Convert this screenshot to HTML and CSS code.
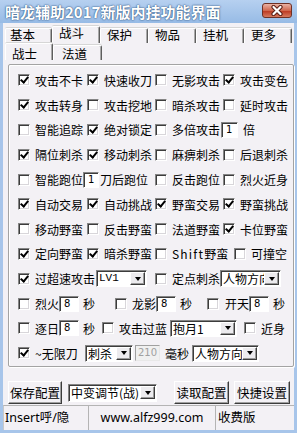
FILE: index.html
```html
<!DOCTYPE html>
<html>
	<head>
		<meta charset="utf-8">
		<title>暗龙辅助2017新版内挂功能界面</title>
		<link rel="stylesheet" href="styles.css">
	</head>
	<body>
		<div class="window">
			<div class="title_bar">
				<span class="title_text">暗龙辅助2017新版内挂功能界面</span>
				<span class="close_button">
					<svg width="14" height="11" viewBox="0 0 14 11">
						<path d="M3.5 2 L10.5 9 M10.5 2 L3.5 9" stroke="#5b1f16" stroke-width="4.2" stroke-linecap="round"/>
						<path d="M3.5 2 L10.5 9 M10.5 2 L3.5 9" stroke="#fff" stroke-width="2.2" stroke-linecap="round"/>
					</svg>
				</span>
			</div>
			<div class="client">
				<div class="tab_row">
					<span class="tab tab_first">基本</span>
					<span class="tab tab_on">战斗</span>
					<span class="tab">保护</span>
					<span class="tab">物品</span>
					<span class="tab">挂机</span>
					<span class="tab">更多</span>
				</div>
				<div class="tab_row sub_row">
					<span class="tab tab_on">战士</span>
					<span class="tab">法道</span>
				</div>

				<div class="group">
					<div class="row">
						<label class="opt"><span class="check on"></span>攻击不卡</label>
						<label class="opt"><span class="check on"></span>快速收刀</label>
						<label class="opt"><span class="check"></span>无影攻击</label>
						<label class="opt"><span class="check on"></span>攻击变色</label>
					</div>
					<div class="row">
						<label class="opt"><span class="check on"></span>攻击转身</label>
						<label class="opt"><span class="check"></span>攻击挖地</label>
						<label class="opt"><span class="check"></span>暗杀攻击</label>
						<label class="opt"><span class="check"></span>延时攻击</label>
					</div>
					<div class="row">
						<label class="opt"><span class="check"></span>智能追踪</label>
						<label class="opt"><span class="check on"></span>绝对锁定</label>
						<label class="opt wide"><span class="check"></span>多倍攻击<span class="edit edit_small">1</span><span class="unit_wide">倍</span></label>
					</div>
					<div class="row">
						<label class="opt"><span class="check on"></span>隔位刺杀</label>
						<label class="opt"><span class="check on"></span>移动刺杀</label>
						<label class="opt"><span class="check"></span>麻痹刺杀</label>
						<label class="opt"><span class="check"></span>后退刺杀</label>
					</div>
					<div class="row">
						<label class="opt wide"><span class="check"></span>智能跑位<span class="edit edit_run">1</span><span class="after_text">刀后跑位</span></label>
						<label class="opt"><span class="check"></span>反击跑位</label>
						<label class="opt"><span class="check"></span>烈火近身</label>
					</div>
					<div class="row">
						<label class="opt"><span class="check on"></span>自动交易</label>
						<label class="opt"><span class="check on"></span>自动挑战</label>
						<label class="opt"><span class="check on"></span>野蛮交易</label>
						<label class="opt"><span class="check on"></span>野蛮挑战</label>
					</div>
					<div class="row">
						<label class="opt"><span class="check"></span>移动野蛮</label>
						<label class="opt"><span class="check"></span>反击野蛮</label>
						<label class="opt"><span class="check"></span>法道野蛮</label>
						<label class="opt"><span class="check on"></span>卡位野蛮</label>
					</div>
					<div class="row">
						<label class="opt"><span class="check on"></span>定向野蛮</label>
						<label class="opt"><span class="check on"></span>暗杀野蛮</label>
						<label class="opt"><span class="check"></span><span class="shift">Shift</span>野蛮</label>
						<label class="opt opt_push"><span class="check"></span>可撞空</label>
					</div>
					<div class="row">
						<label class="opt wide"><span class="check on"></span>过超速攻击<span class="combo combo_lv"><span class="combo_text">LV1</span><span class="combo_button"></span></span></label>
						<label class="opt wide"><span class="check"></span>定点刺杀<span class="combo combo_dir"><span class="combo_text">人物方向</span><span class="combo_button"></span></span></label>
					</div>
					<div class="row_free">
						<label class="opt cell_fire"><span class="check"></span>烈火<span class="edit edit_sec">8</span><span class="unit">秒</span></label>
						<label class="opt cell_dragon"><span class="check"></span>龙影<span class="edit edit_sec">8</span><span class="unit">秒</span></label>
						<label class="opt"><span class="check"></span><span class="label_sky">开天</span><span class="edit edit_sec">8</span><span class="unit">秒</span></label>
					</div>
					<div class="row_free">
						<label class="opt cell_sun"><span class="check"></span>逐日<span class="edit edit_sec">8</span><span class="unit">秒</span></label>
						<label class="opt cell_blue"><span class="check"></span>攻击过蓝<span class="combo combo_moon"><span class="combo_text">抱月1</span><span class="combo_button"></span></span></label>
						<label class="opt"><span class="check"></span>近身</label>
					</div>
					<div class="row_free">
						<label class="opt"><span class="check on"></span><span class="label_inf">~无限刀</span></label>
						<span class="combo combo_kill"><span class="combo_text">刺杀</span><span class="combo_button"></span></span>
						<span class="edit edit_ms">210</span>
						<span class="unit_ms">毫秒</span>
						<span class="combo combo_face"><span class="combo_text">人物方向</span><span class="combo_button"></span></span>
					</div>
				</div>

				<div class="button_row">
					<span class="push push_save">保存配置</span>
					<span class="combo combo_mode"><span class="combo_text">中变调节(战)</span><span class="combo_button"></span></span>
					<span class="push push_load">读取配置</span>
					<span class="push push_keys">快捷设置</span>
				</div>

				<div class="status_bar">
					<span class="status_cell status_key">Insert呼/隐</span>
					<span class="status_cell status_site">www.alfz999.com</span>
					<span class="status_cell status_ver">收费版</span>
				</div>
			</div>
		</div>
	</body>
</html>
```

FILE: styles.css
```css
body
{
	margin:0;
	font-family:"Noto Sans CJK SC", "Noto Sans", sans-serif;
	font-size:12px;
	color:#000;
}
.window
{
	width:297px;
	height:433px;
	box-sizing:border-box;
	padding:0 3px 3px 3px;
	background:#a7c5ea;
	display:flex;
	flex-direction:column;
}
/*=============================*/
.title_bar
{
	height:23px;
	flex:none;
	margin:0 -3px;
	padding:0 5px;
	display:flex;
	justify-content:space-between;
	align-items:center;
	background:linear-gradient(#b6d0f0, #97bbe5);
}
.title_text
{
	color:#fff;
	font-size:15px;
	font-weight:bold;
	line-height:23px;
	text-shadow:0 0 2px #2f5580, 0 0 1px #2f5580;
}
.close_button
{
	width:30px;
	height:15px;
	box-sizing:border-box;
	align-self:flex-start;
	margin-top:3px;
	border:1px solid #6e3025;
	border-radius:3px;
	background:linear-gradient(#eab2a4, #d0684f 50%, #bd3a23 55%, #d57a5f);
	display:flex;
	justify-content:center;
	align-items:center;
}
/*=============================*/
.client
{
	flex:1;
	background:#f3f1f5;
	display:flex;
	flex-direction:column;
}
.tab_row
{
	height:17px;
	flex:none;
	margin-top:3px;
	padding-left:2px;
	display:flex;
	align-items:flex-end;
}
.sub_row
{
	margin-top:0;
}
.tab
{
	width:48px;
	height:15px;
	box-sizing:border-box;
	padding-left:6px;
	border-top:1px solid #fff;
	border-left:1px solid #fff;
	border-right:1px solid #5e5e5e;
	border-top-left-radius:2px;
	border-top-right-radius:2px;
	box-shadow:inset -1px 0 0 #a9a9a9, 0 -1px 0 #d6d6d6;
	font-size:12.5px;
	line-height:12px;
	white-space:nowrap;
}
.tab_first
{
	width:47px;
	padding-left:4px;
}
.tab_on
{
	height:17px;
	line-height:12px;
}
.sub_row .tab
{
	width:49px;
	padding-left:8px;
	line-height:15px;
}
.sub_row .tab_on
{
	width:48px;
	padding-left:6px;
	line-height:19px;
}
/*=============================*/
.group
{
	height:303px;
	flex:none;
	box-sizing:border-box;
	margin:4px 0 0 5px;
	width:286px;
	padding-top:3px;
	border:1px solid #a3a3a3;
	border-radius:2px;
	box-shadow:1px 1px 0 #fff, inset 1px 1px 0 #fff;
}
.row
{
	height:24.8px;
	padding-left:9px;
	display:grid;
	grid-template-columns:69px 68px 68px 68px;
	align-items:center;
}
.row_free
{
	height:24.8px;
	padding-left:9px;
	display:flex;
	align-items:center;
}
.opt
{
	display:flex;
	align-items:center;
	white-space:nowrap;
}
.wide
{
	grid-column:span 2;
}
.opt_push
{
	margin-left:11px;
}
.check
{
	position:relative;
	flex:none;
	width:12px;
	height:12px;
	box-sizing:border-box;
	margin-right:5px;
	border:1px solid;
	border-color:#858585 #fff #fff #858585;
	box-shadow:inset 1px 1px 0 #3c3c3c, inset -1px -1px 0 #d8d6da;
	background:#fff;
}
.check.on::after
{
	content:"";
	position:absolute;
	left:3px;
	top:0px;
	width:3px;
	height:6px;
	border:solid #000;
	border-width:0 2px 2px 0;
	transform:rotate(40deg);
}
.shift
{
	letter-spacing:1.2px;
}
/*=============================*/
.edit
{
	height:16px;
	box-sizing:border-box;
	flex:none;
	padding-left:4px;
	border:1px solid;
	border-color:#858585 #fff #fff #858585;
	box-shadow:inset 1px 1px 0 #3c3c3c;
	background:#fff;
	font-family:"DejaVu Sans", sans-serif;
	font-size:10px;
	line-height:14px;
}
.edit_small
{
	width:17px;
	margin-left:1px;
}
.edit_run
{
	width:16px;
}
.edit_sec
{
	width:20px;
}
.edit_ms
{
	width:25px;
	margin-left:2px;
	padding-left:2px;
	background:#f0f0f0;
	color:#a0a0a0;
	box-shadow:none;
	border-color:#a0a0a0 #e8e8e8 #e8e8e8 #a0a0a0;
}
.unit
{
	margin-left:4px;
}
.unit_wide
{
	margin-left:5px;
}
.unit_ms
{
	margin-left:5px;
}
.after_text
{
	margin-left:1px;
}
.label_sky
{
	margin-left:1px;
}
.label_inf
{
	width:50px;
}
.cell_fire
{
	width:97px;
}
.cell_dragon
{
	width:92px;
}
.cell_sun
{
	width:84px;
}
.cell_blue
{
	width:142px;
}
/*=============================*/
.combo
{
	height:17px;
	box-sizing:border-box;
	flex:none;
	padding:0 1px 0 2px;
	border:1px solid;
	border-color:#858585 #fff #fff #858585;
	box-shadow:inset 1px 1px 0 #3c3c3c;
	background:#fff;
	display:flex;
	align-items:center;
	overflow:hidden;
}
.combo_text
{
	flex:1;
	overflow:hidden;
	white-space:nowrap;
	line-height:15px;
}
.combo_button
{
	flex:none;
	width:15px;
	height:13px;
	box-sizing:border-box;
	border:1px solid;
	border-color:#fff #3c3c3c #3c3c3c #fff;
	box-shadow:inset -1px -1px 0 #9a9a9a;
	background:#ecebee;
	display:flex;
	justify-content:center;
	align-items:center;
}
.combo_button::after
{
	content:"";
	border-left:3.5px solid transparent;
	border-right:3.5px solid transparent;
	border-top:4px solid #000;
}
.combo_lv
{
	width:51px;
	margin-left:1px;
	font-family:"Liberation Mono", monospace;
	font-size:11px;
}
.combo_dir
{
	width:61px;
}
.combo_moon
{
	width:67px;
	margin-left:3px;
}
.combo_kill
{
	width:48px;
}
.combo_face
{
	width:67px;
	margin-left:3px;
}
/*=============================*/
.button_row
{
	height:25px;
	flex:none;
	margin-top:13px;
	padding-left:5px;
	display:flex;
	align-items:center;
}
.push
{
	height:23px;
	box-sizing:border-box;
	border:1px solid;
	border-color:#fff #3c3c3c #3c3c3c #fff;
	box-shadow:inset -1px -1px 0 #a0a0a0;
	font-size:12.5px;
	display:flex;
	justify-content:center;
	align-items:center;
	white-space:nowrap;
}
.push_save
{
	width:54px;
}
.combo_mode
{
	width:89px;
	height:18px;
	margin-left:6px;
}
.push_load
{
	width:55px;
	margin-left:17px;
}
.push_keys
{
	width:56px;
	margin-left:5px;
}
/*=============================*/
.status_bar
{
	height:25px;
	flex:none;
	display:flex;
	font-family:"Noto Sans", "Noto Sans CJK SC", sans-serif;
	font-size:12.5px;
}
.status_cell
{
	box-sizing:border-box;
	border-top:1px solid #b4b4b4;
	border-left:1px solid #b4b4b4;
	line-height:23px;
	white-space:nowrap;
	overflow:hidden;
}
.status_key
{
	width:85px;
	padding-left:1px;
	border-left-color:#c8c8c8;
}
.status_site
{
	width:127px;
	text-align:center;
}
.status_ver
{
	width:79px;
	padding-left:2px;
}
```
